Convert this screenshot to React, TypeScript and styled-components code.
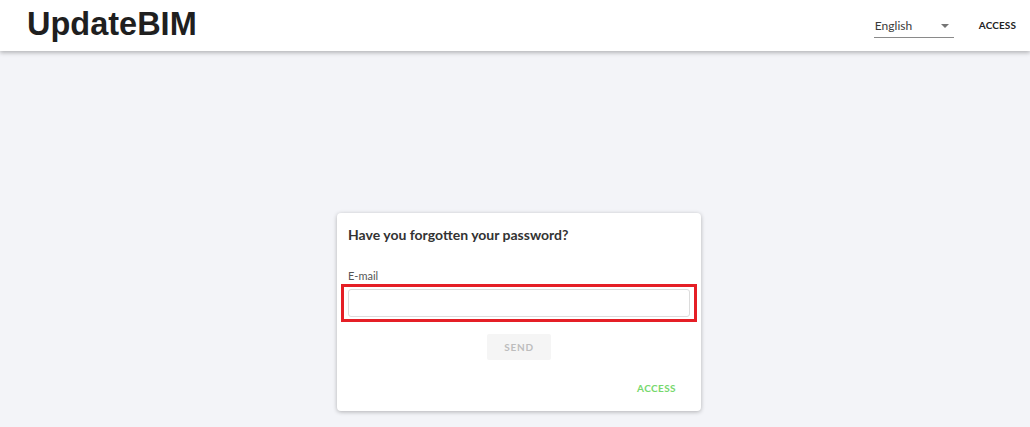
import React from "react";
import styled, { createGlobalStyle } from "styled-components";

const GlobalStyle = createGlobalStyle`
  html, body {
    margin: 0;
    padding: 0;
    background: #f3f4f8;
    font-family: "Lato", "Open Sans", sans-serif;
  }
`;

const Page = styled.div`
  min-height: 427px;
  display: flex;
  flex-direction: column;
`;

const Header = styled.header`
  height: 51px;
  background: #fff;
  box-shadow: 0 2px 4px rgba(0, 0, 0, 0.25);
  display: flex;
  align-items: center;
  padding: 0 14px 0 27px;
  position: relative;
  z-index: 1;
`;

const Logo = styled.h1`
  margin: 0;
  font-family: "Liberation Sans", Arial, sans-serif;
  font-weight: 700;
  font-size: 32.5px;
  color: #1f1f1f;
  flex: 1;
  padding-bottom: 2px;
`;

const LangSelect = styled.div`
  width: 80px;
  height: 24px;
  margin-top: 1px;
  border-bottom: 1px solid #8a8a8a;
  display: flex;
  align-items: center;
  justify-content: space-between;
  font-size: 12px;
  color: #3a3a3a;
  padding-left: 1px;
  box-sizing: border-box;
`;

const Caret = styled.span`
  width: 0;
  height: 0;
  border-left: 4px solid transparent;
  border-right: 4px solid transparent;
  border-top: 4px solid #757575;
  margin-right: 5px;
`;

const TopLink = styled.a`
  margin-left: 25px;
  margin-bottom: 1px;
  font-size: 10px;
  font-weight: 700;
  letter-spacing: 0.1px;
  color: #222;
  text-decoration: none;
`;

const Main = styled.main`
  flex: 1;
  display: flex;
  justify-content: center;
  padding: 162px 0 0 8px;
`;

const Card = styled.section`
  width: 364px;
  height: 198px;
  background: #fff;
  border-radius: 4px;
  box-shadow: 0 1px 4px rgba(0, 0, 0, 0.28);
  box-sizing: border-box;
  padding: 14px 11px 0 11px;
  display: flex;
  flex-direction: column;
`;

const Title = styled.h2`
  margin: 0;
  font-size: 14px;
  font-weight: 700;
  color: #333;
  height: 16px;
  line-height: 16px;
`;

const Label = styled.label`
  margin-top: 26px;
  font-size: 11px;
  color: #555;
  line-height: 14px;
`;

const Highlight = styled.div`
  margin: 1px -7px 0 -7px;
  border: 3px solid #e51f26;
  padding: 2px 4px;
`;

const Input = styled.input`
  display: block;
  width: 100%;
  height: 28px;
  box-sizing: border-box;
  border: 1px solid #dcdcdc;
  border-radius: 3px;
  outline: none;
`;

const Actions = styled.div`
  display: flex;
  justify-content: center;
  margin-top: 12px;
`;

const SendButton = styled.button`
  width: 64px;
  height: 26px;
  padding: 0;
  border: none;
  border-radius: 2px;
  background: #f5f5f5;
  color: #bdbdbd;
  font-family: inherit;
  font-size: 10px;
  font-weight: 700;
  letter-spacing: 0.8px;
`;

const Footer = styled.div`
  display: flex;
  justify-content: flex-end;
  padding-right: 14px;
  margin-top: 22px;
`;

const GreenLink = styled.a`
  font-size: 10px;
  font-weight: 700;
  letter-spacing: 0.4px;
  color: #77d86d;
  text-decoration: none;
`;

export default function App() {
  return (
    <Page>
      <GlobalStyle />
      <Header>
        <Logo>UpdateBIM</Logo>
        <LangSelect>
          <span>English</span>
          <Caret />
        </LangSelect>
        <TopLink href="#">ACCESS</TopLink>
      </Header>
      <Main>
        <Card>
          <Title>Have you forgotten your password?</Title>
          <Label>E-mail</Label>
          <Highlight>
            <Input type="email" />
          </Highlight>
          <Actions>
            <SendButton disabled>SEND</SendButton>
          </Actions>
          <Footer>
            <GreenLink href="#">ACCESS</GreenLink>
          </Footer>
        </Card>
      </Main>
    </Page>
  );
}
